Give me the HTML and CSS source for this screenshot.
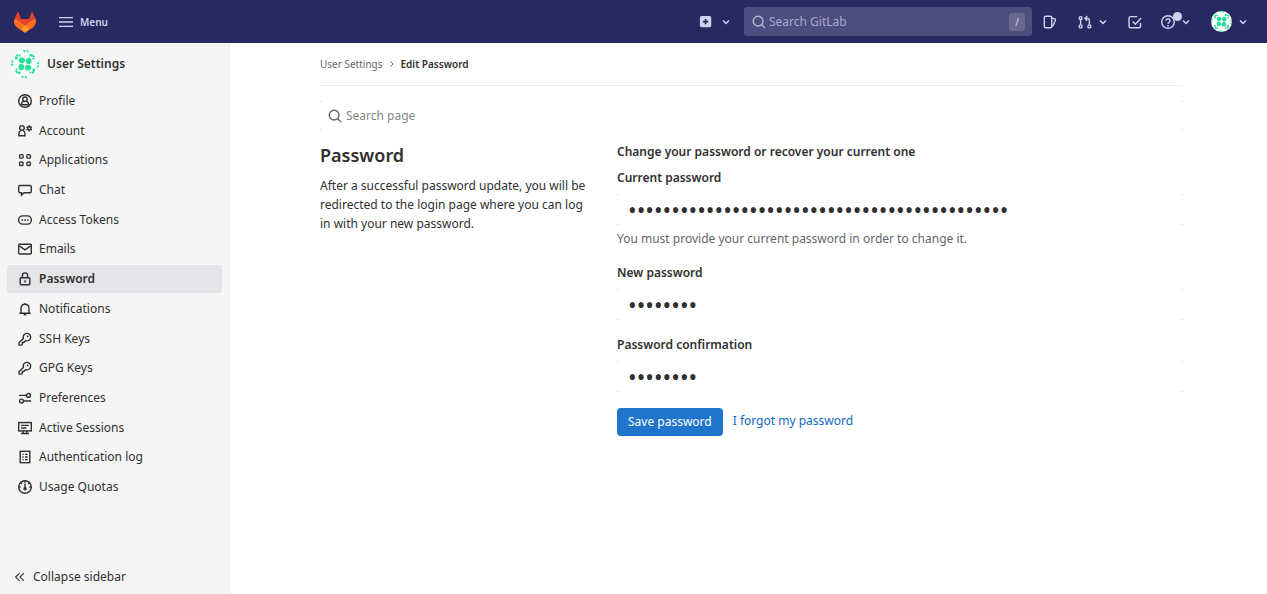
FILE: index.html
```html
<!DOCTYPE html>
<html lang="en">
<head>
<meta charset="utf-8">
<title>Edit Password · User Settings · GitLab</title>
<meta name="viewport" content="width=device-width, initial-scale=1">
<link rel="stylesheet" href="styles.css">
</head>
<body>
<svg class="sprite" aria-hidden="true">
  <symbol id="avatar" viewBox="0 0 28 28">
    <clipPath id="round"><circle cx="14" cy="14" r="14"/></clipPath>
    <g clip-path="url(#round)">
      <rect width="28" height="28" fill="#fff"/>
      <g fill="#2bde9c">
        <g id="q">
          <path d="M9.500 7.500h3l1.500 1.700v2.300l-1.600 1.700H9.500L7.700 11.500V9.200zM11.200 0h2.800v3zM3.500 6.500L7 3.500v3.200zM7.500 4.500h2v2h-2zM4 7h2.500v2.500H4zM0 10.500h3L.5 14z"/>
        </g>
        <use href="#q" transform="rotate(90 14 14)"/>
        <use href="#q" transform="rotate(180 14 14)"/>
        <use href="#q" transform="rotate(270 14 14)"/>
      </g>
    </g>
  </symbol>
  <symbol id="chevron" viewBox="0 0 16 16"><path d="M4 6l4 4 4-4"/></symbol>
  <symbol id="search" viewBox="0 0 16 16"><circle cx="7" cy="7" r="5.6"/><path d="M11.2 11.2L15 15"/></symbol>
  <symbol id="key" viewBox="0 0 16 16"><path d="M6.2 7.4a4.300 4.300 0 1 1 2.600 2.500L6.500 12H5v2l-1 1H1.200v-3z"/><circle class="solid" cx="11" cy="5" r="1"/></symbol>
</svg>

<header class="topbar">
  <a class="brand" href="#" aria-label="GitLab">
    <svg class="logo" viewBox="0 0 24 22">
      <path fill="#e24329" d="M1.500 8L4.500 1q.5-.8 1 0l2.500 7h8l2.500-7q.5-.8 1 0l3 7L20 15l-8 6-8-6z"/>
      <path fill="#fc6d26" d="M1.500 8Q4 8.300 7 10.800l5 3.700 5-3.700Q20 8.300 22.500 8q1.800 4.500-2 8L12 22l-8.500-6Q-.3 12.500 1.500 8z"/>
      <path fill="#fca326" d="M12 14.500l4 3.200-3.200 2.900q-.8.700-1.600 0L8 17.700z"/>
    </svg>
  </a>
  <button class="menu" type="button">
    <svg class="icon" viewBox="0 0 16 16"><path d="M0 3h16M0 8h16M0 13h16"/></svg>
    <span>Menu</span>
  </button>
  <div class="tools">
    <button class="tool create" type="button" aria-label="Create new">
      <svg class="icon" viewBox="0 0 16 16"><rect class="solid" x="1" y="1" width="13" height="13" rx="2"/><path class="cut" d="M7.500 4.500v6M4.500 7.500h6"/></svg>
      <svg class="caret"><use href="#chevron"/></svg>
    </button>
    <label class="global-search">
      <svg class="icon"><use href="#search"/></svg>
      <input type="text" placeholder="Search GitLab" aria-label="Search GitLab">
      <kbd>/</kbd>
    </label>
    <a class="tool issues" href="#" aria-label="Issues">
      <svg class="icon" viewBox="0 0 16 16"><rect x="1.500" y="1.500" width="8.500" height="13" rx="1.500"/><path d="M10 3.500l3.500 1q1 .4.700 1.400L11.500 12 10 13"/></svg>
    </a>
    <button class="tool merges" type="button" aria-label="Merge requests">
      <svg class="icon" viewBox="0 0 16 16"><circle cx="3" cy="3.500" r="1.700"/><circle cx="3" cy="13" r="1.700"/><circle cx="13" cy="13" r="1.700"/><path d="M3 5.500V11M13 11V6q0-2-2-2H8.500M10.500 1.200L8 4l2.500 2.500"/></svg>
      <svg class="caret"><use href="#chevron"/></svg>
    </button>
    <a class="tool todos" href="#" aria-label="To-Do List">
      <svg class="icon" viewBox="0 0 16 16"><path d="M10.500 1.800H3Q1.200 1.800 1.200 3.500v9.300q0 1.700 1.800 1.700h9.500q1.800 0 1.800-1.700V9M5.500 7.500l3 3L15 3.500"/></svg>
    </a>
    <button class="tool help" type="button" aria-label="Help">
      <svg class="icon" viewBox="0 0 16 16"><circle cx="8" cy="8" r="7.200"/><path d="M5.700 6.500a2.300 2.200 0 1 1 3.600 1.800Q8 9 8 10"/><circle class="solid" cx="8" cy="12" r="1"/></svg>
      <span class="dot"></span>
      <svg class="caret"><use href="#chevron"/></svg>
    </button>
    <button class="tool account" type="button" aria-label="Account">
      <svg class="face"><use href="#avatar"/></svg>
      <svg class="caret"><use href="#chevron"/></svg>
    </button>
  </div>
</header>

<div class="layout">
  <aside class="sidebar">
    <a class="context" href="#"><svg class="portrait"><use href="#avatar"/></svg><span>User Settings</span></a>
    <nav class="links" aria-label="User settings">
      <a href="#"><svg class="icon" viewBox="0 0 16 16"><circle cx="8" cy="8" r="7.200"/><circle cx="8" cy="6" r="2.500"/><path d="M3.800 13.500v-1Q4 9 6.500 8.200M12.200 13.500v-1Q12 9 9.500 8.200M4 12.300h8"/></svg>Profile</a>
      <a href="#"><svg class="icon" viewBox="0 0 16 16"><circle cx="4.500" cy="4.500" r="2.600"/><path d="M3 7.500Q1 8.500 1 11v2.500h7V11Q8 8.500 6 7.500"/><circle cx="12.800" cy="5" r="1.800"/><path d="M12.800 1.500v2M12.800 6.500v2M9.700 3.200l1.700 1M14.200 5.800l1.700 1M9.700 6.800l1.700-1M14.200 4.200l1.700-1"/></svg>Account</a>
      <a href="#"><svg class="icon" viewBox="0 0 16 16"><rect x="1.800" y="1.800" width="4" height="4" rx="1"/><rect x="10.200" y="1.800" width="4" height="4" rx="1"/><rect x="1.800" y="10.200" width="4" height="4" rx="1"/><rect x="10.200" y="10.200" width="4" height="4" rx="1"/></svg>Applications</a>
      <a href="#"><svg class="icon" viewBox="0 0 16 16"><path d="M2.500 2.800h11q1.700 0 1.700 1.700v5q0 1.700-1.700 1.700H7L4 14v-2.800H2.500Q.8 11.200.8 9.500v-5q0-1.700 1.700-1.700z"/></svg>Chat</a>
      <a href="#"><svg class="icon" viewBox="0 0 16 16"><rect x=".8" y="3.300" width="14.400" height="9.400" rx="4.500"/><g class="solid"><circle cx="4.800" cy="8" r="1"/><circle cx="8" cy="8" r="1"/><circle cx="11.200" cy="8" r="1"/></g></svg>Access Tokens</a>
      <a href="#"><svg class="icon" viewBox="0 0 16 16"><rect x=".8" y="2.500" width="14.400" height="11.200" rx="1"/><path d="M1.500 4.500L8 9l6.500-4.500"/></svg>Emails</a>
      <a class="active" href="#" aria-current="page"><svg class="icon" viewBox="0 0 16 16"><rect x="2.500" y="6.500" width="11" height="8" rx="1"/><path d="M5 6.500V4q0-3 3-3t3 3v2.500M8 9.500v2.500"/></svg>Password</a>
      <a href="#"><svg class="icon" viewBox="0 0 16 16"><path d="M1.500 12.800h13M3.500 12.500V7q0-4.500 4.500-4.500T12.500 7v5.500M8 1v1.500"/><path d="M6.500 14.500h3"/></svg>Notifications</a>
      <a href="#"><svg class="icon"><use href="#key"/></svg>SSH Keys</a>
      <a href="#"><svg class="icon"><use href="#key"/></svg>GPG Keys</a>
      <a href="#"><svg class="icon" viewBox="0 0 16 16"><circle cx="12" cy="5" r="2.200"/><circle cx="4" cy="11.500" r="2.200"/><path d="M1 5h8.500M6.500 11.500H15"/></svg>Preferences</a>
      <a href="#"><svg class="icon" viewBox="0 0 16 16"><rect x=".8" y="1.800" width="14.400" height="9.500"/><path d="M3.500 5h9M3.500 8h6M6 11v3M10 11v3M3.500 14.200h9"/></svg>Active Sessions</a>
      <a href="#"><svg class="icon" viewBox="0 0 16 16"><rect x="2.500" y="1.500" width="11" height="13"/><path d="M5 5h1.500M8 5h3M5 8h1.500M8 8h3M5 11h1.500M8 11h3"/></svg>Authentication log</a>
      <a href="#"><svg class="icon" viewBox="0 0 16 16"><circle cx="8" cy="8" r="7.200"/><path d="M8 4v5M8 1v2M1 8h2M13 8h2M3 3.500l1.500 1M13 3.500l-1.500 1"/><circle class="solid" cx="8" cy="10" r="2"/></svg>Usage Quotas</a>
    </nav>
    <button class="collapse" type="button"><svg class="icon" viewBox="0 0 16 16"><path d="M7.500 3.500L3 8l4.500 4.500M12.500 3.500L8 8l4.500 4.500"/></svg><span>Collapse sidebar</span></button>
  </aside>

  <main class="content">
    <nav class="crumbs" aria-label="Breadcrumb">
      <a href="#">User Settings</a>
      <svg class="crumb-arrow" viewBox="0 0 8 8"><path d="M2.500 1.500L5 4 2.500 6.500"/></svg>
      <strong>Edit Password</strong>
    </nav>
    <label class="page-search field">
      <svg class="icon"><use href="#search"/></svg>
      <input type="text" placeholder="Search page" aria-label="Search page">
    </label>
    <div class="columns">
      <section class="intro">
        <h1>Password</h1>
        <p>After a successful password update, you will be redirected to the login page where you can log in with your new password.</p>
      </section>
      <form class="form">
        <h2>Change your password or recover your current one</h2>
        <div class="group">
          <label for="current">Current password</label>
          <input class="field" id="current" type="password" value="00000000000000000000000000000000000000000000">
          <p class="hint">You must provide your current password in order to change it.</p>
        </div>
        <div class="group">
          <label for="new">New password</label>
          <input class="field" id="new" type="password" value="00000000">
        </div>
        <div class="group">
          <label for="confirm">Password confirmation</label>
          <input class="field" id="confirm" type="password" value="00000000">
        </div>
        <div class="actions">
          <button class="save" type="submit">Save password</button>
          <a href="#">I forgot my password</a>
        </div>
      </form>
    </div>
  </main>
</div>
</body>
</html>
```
FILE: styles.css
```css
* { box-sizing: border-box; }
body {
  margin: 0;
  min-height: 100vh;
  display: flex;
  flex-direction: column;
  background: #fff;
  color: #303030;
  font: 12px/18px "Noto Sans", sans-serif;
}
a { color: inherit; text-decoration: none; }
button, input { font: inherit; color: inherit; border: 0; background: none; padding: 0; }
input { min-width: 0; outline: 0; }
.sprite { position: absolute; width: 0; height: 0; }
.icon, .caret, .crumb-arrow { flex: none; fill: none; stroke: currentColor; stroke-width: 1.6; }
.icon { width: 14px; height: 14px; }
.solid { fill: currentColor; stroke: none; }

.topbar {
  height: 43px;
  display: flex;
  align-items: center;
  padding: 0 18px 0 13px;
  background: #292961;
  color: #d1d1f0;
}
.logo { display: block; width: 24px; height: 22px; }
.menu { display: flex; align-items: center; gap: 7px; margin-left: 22px; font-size: 10px; font-weight: 600; }
.tools { display: flex; align-items: center; margin-left: auto; }
.tool { display: flex; align-items: center; gap: 5px; }
.caret { width: 12px; height: 12px; stroke-width: 2; }
.create { gap: 7px; margin-right: 12px; }
.cut { stroke: #292961; stroke-width: 2; }
.global-search {
  width: 288px;
  height: 29px;
  display: flex;
  align-items: center;
  gap: 3px;
  padding: 0 7px 0 8px;
  margin-right: 11px;
  background: #4d4d7f;
  border-radius: 3px;
  color: #b5b5d6;
}
.global-search input { flex: 1; }
.global-search ::placeholder { color: #a9a9cc; opacity: 1; }
kbd { width: 16px; height: 18px; border-radius: 3px; background: #69698f; color: #d1d1f0; font: inherit; font-size: 10px; text-align: center; }
.merges { margin-left: 21px; }
.todos { margin-left: 19px; }
.help { position: relative; margin-left: 19px; }
.dot { position: absolute; left: 12px; top: -3px; width: 9px; height: 9px; border-radius: 50%; background: #d1d1f0; }
.account { margin-left: 19px; }
.face { width: 21px; height: 21px; }

.layout { flex: 1; display: flex; }
.sidebar {
  flex: none;
  width: 230px;
  display: flex;
  flex-direction: column;
  padding: 7px 7px 8px;
  background: #f5f5f5;
  border-right: 1px solid #ececec;
}
.context { display: flex; align-items: center; gap: 8px; padding-left: 4px; font-weight: 600; }
.portrait { width: 28px; height: 28px; }
.links { display: flex; flex-direction: column; justify-content: space-between; min-height: 414px; margin-top: 9px; }
.links a { height: 28px; display: flex; align-items: center; gap: 7px; padding-left: 11px; border-radius: 3px; }
.links .active { background: #e4e4e9; font-weight: 600; }
.collapse { display: flex; align-items: center; gap: 6px; margin-top: auto; padding-left: 6px; }
.collapse .icon { stroke-width: 1.3; }

.content { flex: 1; padding: 0 84px 0 90px; }
.crumbs { height: 43px; display: flex; align-items: center; gap: 5px; border-bottom: 1px solid #ececec; font-size: 10px; color: #666; }
.crumbs strong { color: #303030; font-weight: 600; }
.crumb-arrow { width: 8px; height: 8px; stroke-width: 1; }
.field {
  --tick: linear-gradient(#e6e6e6, #e6e6e6);
  background: var(--tick) 0 0 / 2px 1px no-repeat, var(--tick) 100% 0 / 2px 1px no-repeat,
    var(--tick) 0 100% / 2px 1px no-repeat, var(--tick) 100% 100% / 2px 1px no-repeat;
}
.page-search { height: 29px; display: flex; align-items: center; gap: 4px; margin-top: 15px; padding-left: 8px; color: #666; }
.page-search input { flex: 1; }
.page-search ::placeholder { color: #868686; opacity: 1; }
.columns { display: grid; grid-template-columns: 267px 1fr; column-gap: 30px; margin-top: 13px; }
h1 { margin: 0 0 9px; font-size: 18px; line-height: 24px; font-weight: 600; }
.intro p { margin: 0; line-height: 19px; }
h2 { margin: 0 0 8px; font-size: 12px; line-height: 18px; font-weight: 600; }
.group { display: flex; flex-direction: column; margin-bottom: 16px; }
.group label { font-weight: 600; margin-bottom: 7px; }
.group .field { width: 100%; height: 31px; padding: 0 11px; font-size: 23px; }
.hint { margin: 5px 0 0; color: #666; }
.actions { display: flex; gap: 10px; }
.save { height: 28px; padding: 0 11px; border-radius: 4px; background: #1f75cb; color: #fff; }
.actions a { color: #1068bf; padding-top: 4px; }
```
